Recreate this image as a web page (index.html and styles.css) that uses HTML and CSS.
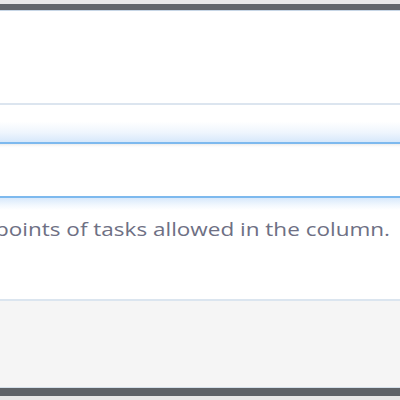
FILE: index.html
```html
<!DOCTYPE html>
<html>
<head>
<meta charset="utf-8">
<link rel="stylesheet" href="styles.css">
</head>
<body>
<div class="modal">
  <div class="modal-top"></div>
  <div class="modal-body">
    <div class="spacer-top"></div>
    <div class="field field-one"></div>
    <div class="field field-two"></div>
    <div class="glow"></div>
    <p class="help">points of tasks allowed in the column.</p>
  </div>
  <div class="modal-footer"></div>
  <div class="modal-bottom"></div>
</div>
</body>
</html>
```
FILE: styles.css
```css
html, body {
  margin: 0;
  padding: 0;
  background: #ffffff;
  overflow: hidden;
}
.modal {
  width: 400px;
  height: 400px;
  display: flex;
  flex-direction: column;
  overflow: hidden;
  background: #e8e8e8;
}
.modal-top {
  margin-top: 4px;
  height: 6px;
  background: #62666b;
  border-bottom: 1px solid #c7d6e6;
}
.modal-body {
  background: #ffffff;
  display: flex;
  flex-direction: column;
  height: 288px;
  border-bottom: 2px solid #dbe5ef;
}
.spacer-top {
  height: 92px;
}
.field-one {
  height: 37px;
  border-top: 2px solid #dce5ef;
  border-bottom: 2px solid #7db9ee;
  background: linear-gradient(to bottom, #ffffff 0%, #ffffff 45%, #eef5fd 75%, #d7e8fb 100%);
}
.field-two {
  height: 52px;
  border-bottom: 2px solid #7db9ee;
  background: linear-gradient(to bottom, #ececec 0px, #fafafa 2px, #ffffff 4px, #ffffff 100%);
}
.glow {
  height: 12px;
  background: linear-gradient(to bottom, #d9e9fb 0%, #f2f8fe 60%, #ffffff 100%);
}
.help {
  margin: 7px 0 0 -5px;
  font-family: "Open Sans", "Noto Sans", sans-serif;
  font-size: 18px;
  line-height: 24px;
  color: #6e7084;
  white-space: nowrap;
  transform: scaleX(1.25);
  transform-origin: left center;
}
.modal-footer {
  height: 86px;
  background: #f5f5f5;
  border-bottom: 1px solid #d5e0ea;
}
.modal-bottom {
  height: 8px;
  background: #5f6368;
}
```
